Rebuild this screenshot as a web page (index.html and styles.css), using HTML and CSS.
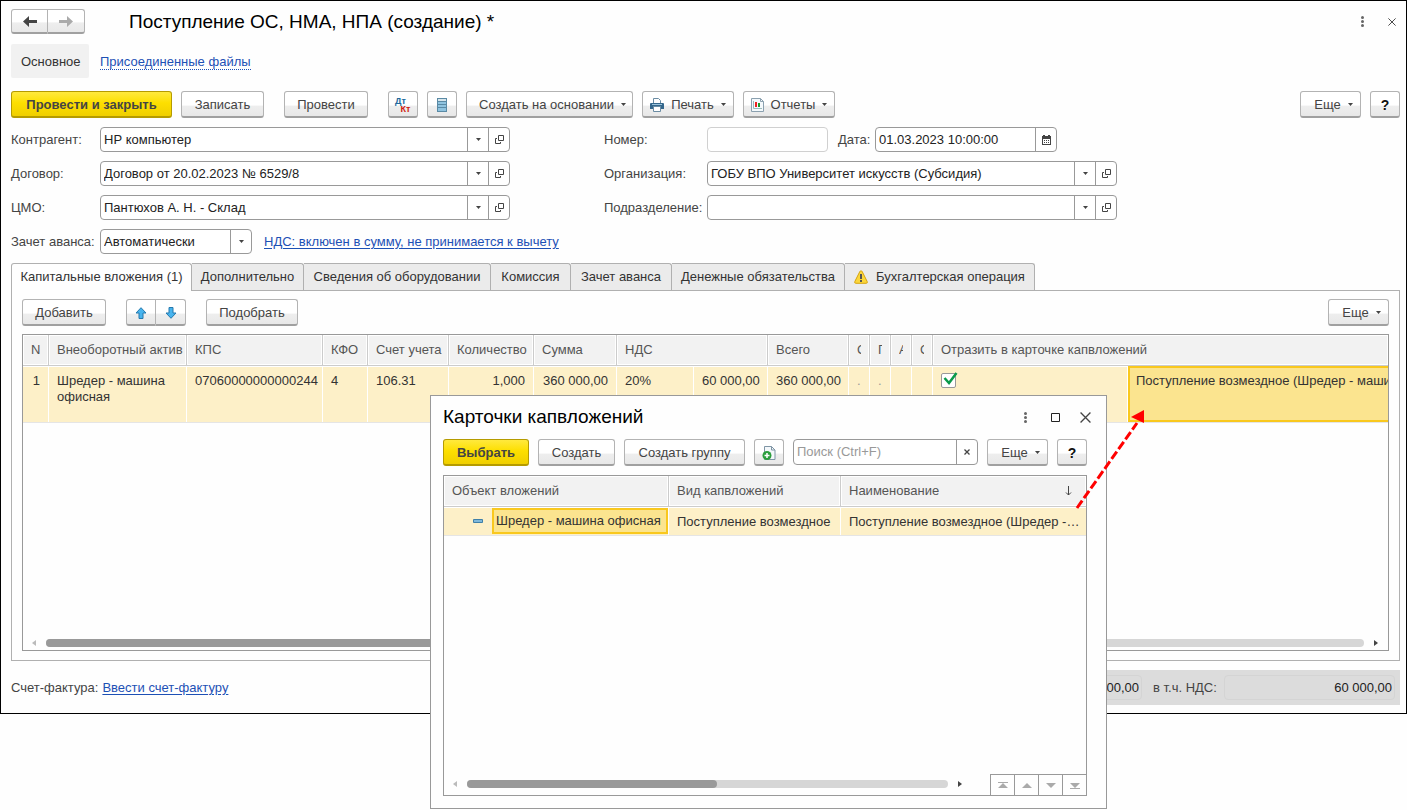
FILE: index.html
```html
<!DOCTYPE html>
<html lang="ru">
<head>
<meta charset="utf-8">
<title>Поступление ОС, НМА, НПА (создание)</title>
<link rel="stylesheet" href="styles.css">
</head>
<body>
<svg class="defs" aria-hidden="true">
  <symbol id="i-open" viewBox="0 0 9 9"><path d="M3.5.5h5v5h-5zM2 3.500H.5v5h5V7" fill="none" stroke="#444"/></symbol>
  <symbol id="i-caret" viewBox="0 0 5 3"><path d="M0 0h5L2.500 3z" fill="#444"/></symbol>
  <symbol id="i-dots" viewBox="0 0 3 11"><g fill="#666"><circle cx="1.500" cy="1.500" r="1.500"/><circle cx="1.500" cy="5.500" r="1.500"/><circle cx="1.500" cy="9.500" r="1.500"/></g></symbol>
  <symbol id="i-close" viewBox="0 0 10 10"><path d="M.5.5l9 9M9.500.5l-9 9" stroke="#444" stroke-width="1.200"/></symbol>
  <symbol id="i-clear" viewBox="0 0 6 6"><path d="M.5.5l5 5M5.500.5l-5 5" stroke="#444" stroke-width="1.300"/></symbol>
  <symbol id="i-left" viewBox="0 0 4 6"><path d="M4 0v6L0 3z" fill="#bbb"/></symbol>
  <symbol id="i-right" viewBox="0 0 4 6"><path d="M0 0v6l4-3z" fill="#444"/></symbol>
</svg>
<main class="window">
  <header class="head">
    <div class="pair">
      <button class="btn" aria-label="Назад"><svg width="14" height="11" viewBox="0 0 14 11"><path d="M0 5.500L6 0v4h8v3H6v4z" fill="#444"/></svg></button>
      <button class="btn" aria-label="Вперед"><svg width="14" height="11" viewBox="0 0 14 11"><path d="M14 5.500L8 0v4H0v3h8v4z" fill="#aaa"/></svg></button>
    </div>
    <h1 class="title">Поступление ОС, НМА, НПА (создание) *</h1>
    <button class="plain" aria-label="Меню"><svg width="3" height="11"><use href="#i-dots"/></svg></button>
    <button class="plain" aria-label="Закрыть"><svg width="8" height="8"><use href="#i-close"/></svg></button>
  </header>
  <nav class="nav">
    <span class="nav-current">Основное</span>
    <a class="nav-link" href="#files">Присоединенные файлы</a>
  </nav>
  <div class="toolbar">
    <button class="btn primary w-post">Провести и закрыть</button>
    <button class="btn w-write">Записать</button>
    <button class="btn w-add apart">Провести</button>
    <button class="btn square apart" aria-label="Дт Кт"><span class="dtkt"><b>Дт</b><b>Кт</b></span></button>
    <button class="btn square" aria-label="Журнал"><svg width="10" height="14" viewBox="0 0 10 14"><rect width="10" height="14" fill="#5a8aa5"/><path d="M1 1h8v2H1z" fill="#d6e5ec"/><path d="M1 4h8v2H1zM1 7h8v2H1zM1 10h8v3H1z" fill="#8fc3df"/></svg></button>
    <button class="btn w-base menu">Создать на основании <svg width="5" height="3"><use href="#i-caret"/></svg></button>
    <button class="btn w-print menu with-icon"><svg width="14" height="14" viewBox="0 0 14 14"><path d="M3.500.5h5l2 2v3h-7z" fill="#fff" stroke="#6b8ca3"/><path d="M0 6q0-1 1-1h12q1 0 1 1v5H0z" fill="#34678c"/><path d="M2 6.500h10" stroke="#9bc3dc"/><path d="M3.500 8.500h7v5h-7z" fill="#fff" stroke="#6b8ca3"/></svg><span>Печать</span><svg width="5" height="3"><use href="#i-caret"/></svg></button>
    <button class="btn w-print menu with-icon"><svg width="13" height="14" viewBox="0 0 13 14"><path d="M.5.5h9l3 3v10H.5z" fill="#f4f9fc" stroke="#8ba0af"/><path d="M9.500.5v3h3" fill="none" stroke="#8ba0af"/><path d="M2.500 3v7.500H11" fill="none" stroke="#9bb"/><path d="M4 4h2v5H4z" fill="#e22"/><path d="M7 5h2v4H7z" fill="#1a9a2c"/></svg><span>Отчеты</span><svg width="5" height="3"><use href="#i-caret"/></svg></button>
    <span class="grow"></span>
    <button class="btn w-more menu">Еще <svg width="5" height="3"><use href="#i-caret"/></svg></button>
    <button class="btn square help">?</button>
  </div>
  <form class="form">
    <div class="col">
      <div class="row"><label class="label" for="agent">Контрагент:</label>
        <div class="field"><select id="agent"><option>НР компьютер</option></select><span class="cell"><svg width="5" height="3"><use href="#i-caret"/></svg></span><button type="button" class="cell" aria-label="Открыть"><svg width="9" height="9"><use href="#i-open"/></svg></button></div></div>
      <div class="row"><label class="label" for="contract">Договор:</label>
        <div class="field"><select id="contract"><option>Договор от 20.02.2023 № 6529/8</option></select><span class="cell"><svg width="5" height="3"><use href="#i-caret"/></svg></span><button type="button" class="cell" aria-label="Открыть"><svg width="9" height="9"><use href="#i-open"/></svg></button></div></div>
      <div class="row"><label class="label" for="cmo">ЦМО:</label>
        <div class="field"><select id="cmo"><option>Пантюхов А. Н. - Склад</option></select><span class="cell"><svg width="5" height="3"><use href="#i-caret"/></svg></span><button type="button" class="cell" aria-label="Открыть"><svg width="9" height="9"><use href="#i-open"/></svg></button></div></div>
      <div class="row"><label class="label" for="advance">Зачет аванса:</label>
        <div class="field short"><select id="advance"><option>Автоматически</option></select><span class="cell"><svg width="5" height="3"><use href="#i-caret"/></svg></span></div>
        <a class="link vat" href="#vat">НДС: включен в сумму, не принимается к вычету</a></div>
    </div>
    <div class="col second">
      <div class="row"><label class="label" for="num">Номер:</label>
        <div class="field number"><input id="num" type="text"></div>
        <label class="date-label" for="date">Дата:</label>
        <div class="field date"><input id="date" type="text" value="01.03.2023 10:00:00"><button type="button" class="cell" aria-label="Календарь"><svg width="9" height="10" viewBox="0 0 9 10"><path d="M0 1h1V0h2v1h3V0h2v1h1v9H0z" fill="#444"/><path d="M1 4h7v5H1z" fill="#fff"/><path d="M2 5.500h5M2 7.500h5" stroke="#444" stroke-dasharray="1 1"/></svg></button></div></div>
      <div class="row"><label class="label" for="org">Организация:</label>
        <div class="field"><select id="org"><option>ГОБУ ВПО Университет искусств (Субсидия)</option></select><span class="cell"><svg width="5" height="3"><use href="#i-caret"/></svg></span><button type="button" class="cell" aria-label="Открыть"><svg width="9" height="9"><use href="#i-open"/></svg></button></div></div>
      <div class="row"><label class="label" for="dept">Подразделение:</label>
        <div class="field"><select id="dept"><option></option></select><span class="cell"><svg width="5" height="3"><use href="#i-caret"/></svg></span><button type="button" class="cell" aria-label="Открыть"><svg width="9" height="9"><use href="#i-open"/></svg></button></div></div>
    </div>
  </form>
  <div class="tabs" role="tablist">
    <button class="tab t1 active" role="tab" aria-selected="true">Капитальные вложения (1)</button>
    <button class="tab t2" role="tab">Дополнительно</button>
    <button class="tab t3" role="tab">Сведения об оборудовании</button>
    <button class="tab t4" role="tab">Комиссия</button>
    <button class="tab t5" role="tab">Зачет аванса</button>
    <button class="tab t6" role="tab">Денежные обязательства</button>
    <button class="tab t7" role="tab"><svg width="14" height="14" viewBox="0 0 14 14"><path d="M7 .8q.8 0 1.200.8l5 10q.6 1.700-1 1.700H1.800q-1.600 0-1-1.700l5-10Q6.200.8 7 .8z" fill="#fbd63b" stroke="#d5a411"/><path d="M6 4h2v5H6zM6 10h2v2H6z" fill="#555"/></svg>Бухгалтерская операция</button>
  </div>
  <section class="panel">
    <div class="toolbar inner">
      <button class="btn w-add">Добавить</button>
      <div class="pair small apart">
        <button class="btn" aria-label="Вверх"><svg width="12" height="12" viewBox="0 0 12 12"><path d="M6 .7l5 5.300H8v5.500H4V6H1z" fill="#48b4ee" stroke="#2579ad"/></svg></button>
        <button class="btn" aria-label="Вниз"><svg width="12" height="12" viewBox="0 0 12 12"><path d="M6 11.300L1 6h3V.5h4V6h3z" fill="#48b4ee" stroke="#2579ad"/></svg></button>
      </div>
      <button class="btn w-print apart">Подобрать</button>
      <span class="grow"></span>
      <button class="btn w-more menu">Еще <svg width="5" height="3"><use href="#i-caret"/></svg></button>
    </div>
    <div class="grid main-grid">
      <table class="table">
        <colgroup><col class="c26"><col class="c138"><col class="c136"><col class="c45"><col class="c81"><col class="c85"><col class="c83"><col class="c77"><col class="c74"><col class="c81"><col class="c21"><col class="c21"><col class="c21"><col class="c21"><col class="c195"><col></colgroup>
        <thead><tr><th>N</th><th>Внеоборотный актив</th><th>КПС</th><th>КФО</th><th>Счет учета</th><th>Количество</th><th>Сумма</th><th colspan="2">НДС</th><th>Всего</th><th><div class="clip">С</div></th><th><div class="clip">Г</div></th><th><div class="clip">А</div></th><th><div class="clip">С</div></th><th colspan="2">Отразить в карточке капвложений</th></tr></thead>
        <tbody><tr><td class="num">1</td><td>Шредер - машина офисная</td><td>07060000000000244</td><td>4</td><td>106.31</td><td class="num">1,000</td><td class="num">360 000,00</td><td>20%</td><td class="num">60 000,00</td><td class="num">360 000,00</td><td class="faint">.</td><td class="faint">.</td><td></td><td></td>
          <td><label class="check"><input type="checkbox" checked aria-label="Отразить в карточке капвложений"><svg width="15" height="13" viewBox="0 0 15 13"><path d="M1.500 6l4.500 5 7.500-10" fill="none" stroke="#0a9a4a" stroke-width="2.500"/></svg></label></td>
          <td class="picked"><div class="clip">Поступление возмездное (Шредер - машина офисная)</div></td></tr></tbody>
      </table>
      <div class="scroll"><svg width="4" height="6"><use href="#i-left"/></svg><span class="track"><span class="thumb half"></span></span><svg width="4" height="6"><use href="#i-right"/></svg></div>
    </div>
  </section>
  <footer class="footer">
    <span>Счет-фактура:</span>
    <a class="link" href="#invoice">Ввести счет-фактуру</a>
    <span class="grow"></span>
    <div class="totals">
      <input class="sum" type="text" value="360 000,00" readonly aria-label="Всего">
      <label class="sum-label" for="vat-sum">в т.ч. НДС:</label>
      <input class="sum" id="vat-sum" type="text" value="60 000,00" readonly>
    </div>
  </footer>
</main>

<section class="dialog" role="dialog" aria-labelledby="dlg-title">
  <header class="dialog-head">
    <h2 class="title" id="dlg-title">Карточки капвложений</h2>
    <button class="plain" aria-label="Меню"><svg width="3" height="11"><use href="#i-dots"/></svg></button>
    <button class="plain" aria-label="Развернуть"><svg width="9" height="9" viewBox="0 0 9 9"><path d="M.5.5h8v8h-8z" fill="none" stroke="#222"/></svg></button>
    <button class="plain" aria-label="Закрыть"><svg width="11" height="11"><use href="#i-close"/></svg></button>
  </header>
  <div class="toolbar">
    <button class="btn primary w-choose">Выбрать</button>
    <button class="btn w-create">Создать</button>
    <button class="btn w-group">Создать группу</button>
    <button class="btn square" aria-label="Создать копированием"><svg width="15" height="16" viewBox="0 0 15 16"><path d="M2.500 1.500h7l3.500 3.500v9.500H2.500z" fill="#f4f8fb" stroke="#7f95a5"/><path d="M9.500 1.500V5H13" fill="none" stroke="#7f95a5"/><circle cx="5" cy="10.500" r="4.500" fill="#2a9d3c"/><path d="M5 8v5M2.500 10.500h5" stroke="#fff" stroke-width="1.500"/></svg></button>
    <div class="field search"><input type="text" placeholder="Поиск (Ctrl+F)" aria-label="Поиск"><button class="cell" aria-label="Очистить"><svg width="6" height="6"><use href="#i-clear"/></svg></button></div>
    <button class="btn w-more menu">Еще <svg width="5" height="3"><use href="#i-caret"/></svg></button>
    <button class="btn square help">?</button>
  </div>
  <div class="grid dialog-grid">
    <table class="table">
      <colgroup><col class="c225"><col class="c172"><col></colgroup>
      <thead><tr><th>Объект вложений</th><th>Вид капвложений</th><th><div class="sorted">Наименование<svg width="7" height="10" viewBox="0 0 7 10"><path d="M3.500 0v9M1 6.500L3.500 9 6 6.500" fill="none" stroke="#444"/></svg></div></th></tr></thead>
      <tbody><tr><td class="tree"><div class="node"><svg width="10" height="4" viewBox="0 0 10 4"><path d="M.5.5h9v3h-9z" fill="#7fb8da" stroke="#4080a8"/></svg><span class="node-name">Шредер - машина офисная</span></div></td><td>Поступление возмездное</td><td class="last"><div class="ellipsis">Поступление возмездное (Шредер - машина офисная)</div></td></tr></tbody>
    </table>
    <div class="dialog-bottom">
      <div class="scroll"><svg width="4" height="6"><use href="#i-left"/></svg><span class="track"><span class="thumb part"></span></span><svg width="4" height="6"><use href="#i-right"/></svg></div>
      <div class="pager">
        <button aria-label="В начало"><svg width="10" height="7" viewBox="0 0 10 7"><path d="M0 0h10v1H0zM5 1l5 5H0z" fill="#aaa"/></svg></button>
        <button aria-label="Вверх"><svg width="10" height="5" viewBox="0 0 10 5"><path d="M5 0l5 5H0z" fill="#aaa"/></svg></button>
        <button aria-label="Вниз"><svg width="10" height="5" viewBox="0 0 10 5"><path d="M5 5L0 0h10z" fill="#aaa"/></svg></button>
        <button aria-label="В конец"><svg width="10" height="7" viewBox="0 0 10 7"><path d="M0 6h10v1H0zM5 6L0 1h10z" fill="#aaa"/></svg></button>
      </div>
    </div>
  </div>
</section>
<svg class="pointer" width="72" height="102" viewBox="0 0 72 102" aria-hidden="true"><path d="M3 99L63 14" stroke="#f00" stroke-width="3" stroke-dasharray="9 3"/><path d="M57 8L70 1v13z" fill="#f00"/></svg>
</body>
</html>
```
FILE: styles.css
```css
* { box-sizing: border-box; }
body { margin: 0; position: relative; min-height: 100vh; background: #fefefe; color: #333; font: 13px/16px "Liberation Sans", Arial, sans-serif; }
button, input, select { font: inherit; color: inherit; margin: 0; }
button { padding: 0; border: 0; background: none; }
svg { display: block; flex: none; }
.defs { display: none; }
.grow { flex: 1; }

.window { border: 1px solid #000; padding: 8px 6px 8px 10px; }
.head { display: flex; align-items: center; height: 25px; }
.title { margin: 0; flex: 1; color: #000; font-size: 19px; line-height: 24px; font-weight: 400; }
.head .title { padding-left: 44px; }
.plain { width: 30px; height: 24px; display: flex; align-items: center; justify-content: center; }
.head .plain:last-child { width: 16px; }
.head .plain { margin-right: 7px; }
.head .plain:last-child { margin-right: 0; }

.nav { display: flex; align-items: center; gap: 11px; margin-top: 10px; }
.nav-current { padding: 10px 10px 8px; width: 78px; background: #f1f1f1; border-radius: 2px; white-space: nowrap; }
.nav-link { margin-top: 2px; color: #1d50b5; text-decoration: none; border-bottom: 1px dotted #1d50b5; line-height: 14px; }
.link { color: #1d50b5; text-underline-offset: 2px; }

.toolbar { display: flex; gap: 9px; margin-top: 13px; }
.btn { display: flex; align-items: center; justify-content: center; height: 27px; padding-top: 1px; border: 1px solid #b3b3b3; border-bottom: 2px solid #a0a0a0; border-radius: 3px; background: linear-gradient(#fff 0 55%, #eee 58%, #e8e8e8); color: #444; white-space: nowrap; }
.btn.primary { border-color: #b59b00; background: linear-gradient(#ffe93e, #fddf00 45%, #f0cf00); color: #444; font-weight: 700; }
.apart { margin-left: 11px; }
.square { width: 30px; }
.menu { gap: 7px; padding-left: 6px; }
.with-icon { padding-left: 0; }
.help { font-weight: 700; color: #111; font-size: 14px; }
.w-post { width: 161px; }
.w-write { width: 83px; }
.w-add { width: 84px; }
.w-base { width: 167px; }
.w-print { width: 92px; }
.w-more { width: 61px; }
.w-choose { width: 86px; }
.w-create { width: 77px; }
.w-group { width: 121px; }
.pair { display: flex; }
.pair .btn { width: 37px; height: 25px; }
.pair .btn:first-child { border-radius: 3px 0 0 3px; }
.pair .btn:last-child { border-left: 0; border-radius: 0 3px 3px 0; }
.pair.small .btn { width: 30px; height: 27px; }
.dtkt { display: flex; flex-direction: column; font-size: 9px; line-height: 8px; }
.dtkt b:first-child { color: #20689c; padding-right: 5px; }
.dtkt b:last-child { color: #d01a10; padding-left: 5px; }

.form { display: flex; gap: 94px; margin-top: 9px; }
.col { display: flex; flex-direction: column; gap: 9px; width: 499px; }
.second { width: 513px; }
.row { display: flex; align-items: center; }
.label { flex: none; width: 89px; color: #444; white-space: nowrap; }
.second .label { width: 103px; }
.field { display: flex; flex: none; width: 410px; height: 25px; border: 1px solid #999; border-radius: 4px; background: #fff; overflow: hidden; }
.field select, .field input { flex: 1; min-width: 0; border: 0; padding: 0 3px; background: none; appearance: none; outline: 0; color: #222; }
.cell { display: flex; align-items: center; justify-content: center; width: 21px; border-left: 1px solid #999; }
.short { width: 152px; }
.vat { margin-left: 12px; white-space: nowrap; }
.number { width: 121px; border-color: #d0d0d0; }
.date-label { width: 37px; margin-left: 10px; color: #444; }
.date { width: 182px; }
.search { width: 185px; height: 26px; }
.search input::placeholder { color: #999; }

.tabs { display: flex; margin-top: 9px; }
.tab { display: flex; align-items: center; justify-content: center; gap: 8px; height: 27px; border: 1px solid #b0b0b0; border-width: 1px 1px 0 0; background: #ebebeb; white-space: nowrap; border-radius: 0 3px 0 0; }
.tab.active { height: 28px; margin-bottom: -1px; padding-bottom: 2px; background: #fefefe; border-left-width: 1px; border-radius: 3px 3px 0 0; position: relative; }
.t1 { width: 181px; }
.t2 { width: 112px; }
.t3 { width: 187px; }
.t4 { width: 80px; }
.t5 { width: 101px; }
.t6 { width: 173px; }
.t7 { width: 190px; }
.panel { border: 1px solid #b0b0b0; padding: 8px 10px 9px; }
.toolbar.inner { margin-top: 0; }

.grid { display: flex; flex-direction: column; margin-top: 8px; border: 1px solid #999; background: #fefefe; }
.main-grid { min-height: 317px; }
.table { width: 100%; table-layout: fixed; border-collapse: separate; border-spacing: 0; border-bottom: 1px solid #e5e5e5; }
.table th { height: 31px; padding: 0 8px; text-align: left; font-weight: 400; color: #555; white-space: nowrap; background: #f2f2f2; border-right: 1px solid #ccc; border-bottom: 1px solid #ccc; box-shadow: inset 0 0 0 1px #fff; }
.table th:last-child { border-right: 0; }
.table td { padding: 6px 8px; vertical-align: top; background: #fdf0c8; border-right: 1px solid #fff; border-top: 1px solid #fff; color: #333; }
.table td:last-child { border-right: 0; }
.main-grid td { height: 56px; }
.table .num { text-align: right; white-space: nowrap; }
.table .faint { color: #999; }
.clip { overflow: hidden; white-space: nowrap; }
.table .picked { padding: 5px 0 5px 6px; background: #fbe48f; border: 2px solid #f9c81e; border-right: 0; }
.check { display: block; position: relative; width: 15px; height: 15px; }
.check input { display: block; appearance: none; width: 15px; height: 15px; border: 1px solid #999; border-radius: 2px; background: #fff; }
.check svg { position: absolute; left: 2px; top: -1px; }
.c21 { width: 21px; }
.c26 { width: 26px; }
.c45 { width: 45px; }
.c74 { width: 74px; }
.c77 { width: 77px; }
.c81 { width: 81px; }
.c83 { width: 83px; }
.c85 { width: 85px; }
.c136 { width: 136px; }
.c138 { width: 138px; }
.c172 { width: 172px; }
.c195 { width: 195px; }
.c225 { width: 225px; }

.scroll { display: flex; align-items: center; gap: 10px; height: 8px; margin: auto 10px 3px 9px; }
.track { flex: 1; height: 8px; border-radius: 4px; background: #d6d6d6; }
.thumb { display: block; height: 8px; border-radius: 4px; background: #999; }
.half { width: 60%; }
.part { width: 52%; }

.footer { display: flex; align-items: center; gap: 4px; margin-top: 9px; color: #444; }
.totals { display: flex; align-items: center; padding: 5px; background: #dcdcdc; }
.sum { width: 171px; height: 25px; padding: 0 2px; text-align: right; border: 1px solid #d4d4d4; border-radius: 4px; background: none; color: #222; }
.sum-label { width: 82px; padding-left: 11px; }

.dialog { position: absolute; left: 430px; top: 395px; width: 677px; padding: 9px 19px 12px 12px; border: 1px solid #999; background: #fefefe; }
.dialog-head { display: flex; align-items: center; margin-right: -13px; height: 24px; }
.dialog .toolbar { margin-top: 10px; }
.dialog-grid { margin-top: 9px; min-height: 321px; }
.dialog-grid td { height: 28px; padding: 6px 8px 5px; white-space: nowrap; }
.dialog-grid .tree { padding: 0; }
.dialog-grid .last { padding-right: 6px; }
.node { display: flex; align-items: center; padding-left: 29px; gap: 9px; }
.node-name { flex: 1; padding: 3px 2px; border: 2px solid #f9c81e; background: #fbe48f; }
.ellipsis { overflow: hidden; text-overflow: ellipsis; }
.sorted { display: flex; justify-content: space-between; align-items: center; padding-right: 6px; }
.dialog-bottom { display: flex; align-items: flex-end; margin-top: auto; }
.dialog-bottom .scroll { flex: 1; margin: 0 28px 7px 9px; }
.pager { display: flex; }
.pager button { display: flex; align-items: center; justify-content: center; width: 24px; height: 21px; border: 1px solid #999; border-width: 1px 0 0 1px; }
.pointer { position: absolute; left: 1074px; top: 409px; pointer-events: none; }
```
